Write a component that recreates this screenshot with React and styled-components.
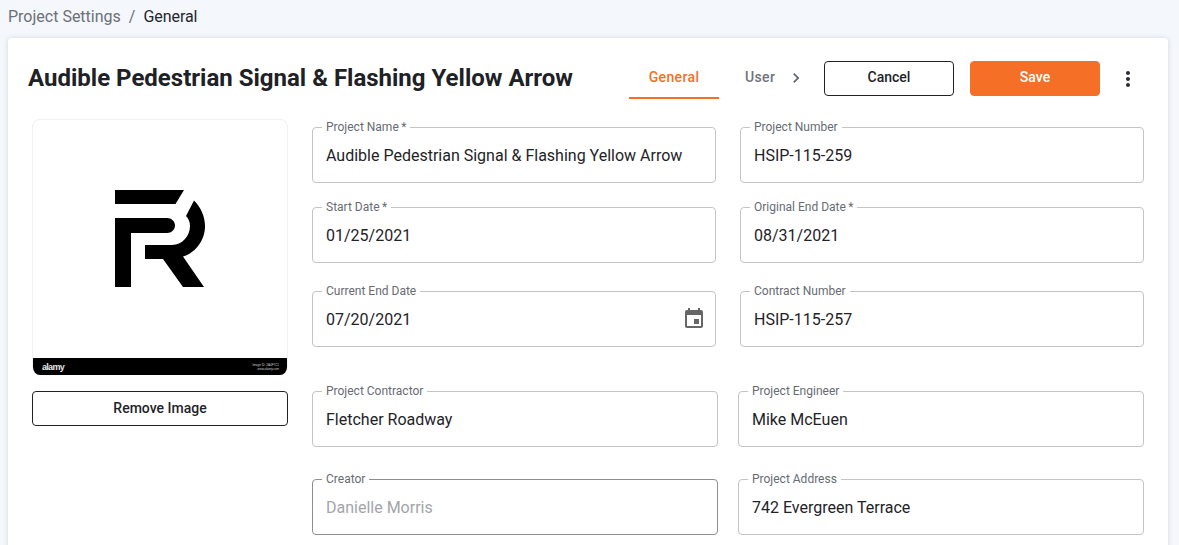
import React from "react";
import styled, { createGlobalStyle } from "styled-components";

const Global = createGlobalStyle`
  html, body { margin: 0; padding: 0; background: #f4f7fb; height: 100%; overflow: hidden; }
  body { font-family: Roboto, "Liberation Sans", sans-serif; color: #1f2328; }
  * { box-sizing: border-box; }
`;

const Page = styled.div`
  width: 1179px;
  height: 545px;
  overflow: hidden;
  padding: 0 11px 0 8px;
`;
const Crumbs = styled.nav`
  display: flex;
  align-items: center;
  height: 38px;
  padding-bottom: 5px;
  font-size: 16px;
  line-height: 24px;
`;
const CrumbLink = styled.span`color: #6c7078;`;
const CrumbSep = styled.span`color: #6c7078; margin: 0 8px;`;
const CrumbNow = styled.span`color: #23272d; letter-spacing: -0.05px;`;
const Card = styled.main`
  background: #fff;
  border-radius: 4px 4px 0 0;
  box-shadow: 0 0 5px rgba(60, 70, 90, 0.18);
  height: 520px;
  padding: 0 24px;
`;
const Header = styled.header`
  display: flex;
  align-items: flex-start;
  height: 81px;
  padding-top: 23px;
`;
const Title = styled.h1`
  margin: 0 0 0 -4px;
  flex: 1;
  font-size: 24px;
  line-height: 34px;
  font-weight: 700;
  color: #1e2125;
  white-space: nowrap;
`;
const Tabs = styled.div`
  display: flex;
  align-items: flex-start;
  height: 38px;
`;
const Tab = styled.div`
  width: ${(p) => p.$w}px;
  height: 38px;
  padding-top: 8px;
  padding-left: ${(p) => p.$pl || 0}px;
  font-size: 14px;
  line-height: 16px;
  letter-spacing: 0.35px;
  font-weight: 500;
  text-align: ${(p) => (p.$pl ? "left" : "center")};
  color: ${(p) => (p.$active ? "#f56f26" : "#6f747b")};
  border-bottom: 2px solid ${(p) => (p.$active ? "#f56f26" : "transparent")};
`;
const Chevron = styled.div`
  width: 32px;
  height: 32px;
  display: flex;
  align-items: center;
  justify-content: center;
  color: #5f6368;
  margin: 1px 12px 0 5px;
`;
const Button = styled.button`
  width: ${(p) => p.$w || 130}px;
  height: 35px;
  margin-left: ${(p) => p.$ml || 0}px;
  padding: 0 0 4px;
  border-radius: 4px;
  border: 1px solid ${(p) => (p.$primary ? "#f56f26" : "#1f2328")};
  background: ${(p) => (p.$primary ? "#f56f26" : "#fff")};
  color: ${(p) => (p.$primary ? "#fff" : "#1f2328")};
  font: 500 14px/16px Roboto, "Liberation Sans", sans-serif;
`;
const Dots = styled.div`
  width: 24px;
  height: 35px;
  margin: 0 4px 0 16px;
  display: flex;
  align-items: center;
  justify-content: center;
  color: #2a2d31;
`;
const Content = styled.div`
  display: grid;
  grid-template-columns: 256px 832px;
  column-gap: 24px;
`;
const Aside = styled.aside`
  display: flex;
  flex-direction: column;
`;
const Picture = styled.div`
  width: 256px;
  height: 256px;
  border-radius: 8px;
  border: 1px solid #f1f1f1;
  border-bottom: none;
  overflow: hidden;
  display: flex;
  flex-direction: column;
`;
const PictureMain = styled.div`
  flex: 1;
  display: flex;
  align-items: center;
  justify-content: center;
`;
const LogoSvg = styled.svg`
  display: block;
  margin: 0;
`;
const Stock = styled.div`
  height: 17px;
  margin: 0 -1px;
  background: #000;
  color: #fff;
  display: flex;
  align-items: center;
  justify-content: space-between;
  padding: 0 9px 0 10px;
`;
const StockBrand = styled.span`
  font: 700 9px/10px "Liberation Sans", sans-serif;
  letter-spacing: -0.7px;
  color: #e6e6e6;
`;
const StockMeta = styled.span`
  font: 3px/4px "Liberation Sans", sans-serif;
  text-align: right;
  color: #cfcfcf;
`;
const RemoveButton = styled(Button)`
  width: 256px;
  height: 35px;
  margin-top: 16px;
  padding-bottom: 2px;
`;
const Fields = styled.div`
  display: flex;
  flex-direction: column;
  padding-top: 8px;
`;
const Row = styled.div`
  display: grid;
  grid-template-columns: ${(p) => (p.$wide ? "406px 406px" : "404px 404px")};
  column-gap: ${(p) => (p.$wide ? 20 : 24)}px;
  margin-top: ${(p) => p.$top || 0}px;
`;
const Field = styled.div`
  position: relative;
  height: 56px;
  border: 1px solid ${(p) => (p.$dim ? "#8f8f8f" : "#c4c4c4")};
  border-radius: 4px;
  padding: 2px 13px 0;
  display: flex;
  align-items: center;
  justify-content: space-between;
`;
const Label = styled.label`
  position: absolute;
  top: -8px;
  left: 9px;
  padding: 0 4px;
  background: #fff;
  color: #686c72;
  font-size: 12px;
  line-height: 14px;
  white-space: nowrap;
`;
const Value = styled.span`
  font-size: 16px;
  line-height: 24px;
  color: ${(p) => (p.$dim ? "#a3a5a9" : "#1f2328")};
  white-space: nowrap;
`;
const CalendarSvg = styled.svg`
  display: block;
  margin: -2px -4px 0 0;
  color: #666;
`;

const Logo = () => (
  <LogoSvg width="90" height="98" viewBox="115 190 90 98" aria-hidden="true">
    <path d="M115 190H184L175.5 204H115Z" fill="#000" />
    <path d="M115 218H167C171.5 218 175 221.3 175 225.5C175 229.7 171.5 233 167 233H131V287H115Z" fill="#000" />
    <path d="M145 245H172C182 245 190 236 190 226C190 222 188.5 218.5 186 216L194 200.5C200.5 207 205 216 205 226C205 241 195 253 183 256.5L204 287H183L163 259H145Z" fill="#000" />
  </LogoSvg>
);

const Calendar = () => (
  <CalendarSvg width="24" height="24" viewBox="0 0 24 24" fill="currentColor" aria-hidden="true">
    <path d="M17 12h-5v5h5v-5zM16 1v2H8V1H6v2H5c-1.11 0-1.99.9-1.99 2L3 19c0 1.1.89 2 2 2h14c1.1 0 2-.9 2-2V5c0-1.1-.9-2-2-2h-1V1h-2zm3 18H5V8h14v11z" />
  </CalendarSvg>
);

const TextField = ({ label, value, dim, icon }) => (
  <Field $dim={dim}>
    <Label>{label}</Label>
    <Value $dim={dim}>{value}</Value>
    {icon}
  </Field>
);

export default function App() {
  return (
    <Page>
      <Global />
      <Crumbs>
        <CrumbLink>Project Settings</CrumbLink>
        <CrumbSep>/</CrumbSep>
        <CrumbNow>General</CrumbNow>
      </Crumbs>
      <Card>
        <Header>
          <Title>Audible Pedestrian Signal &amp; Flashing Yellow Arrow</Title>
          <Tabs>
            <Tab $active $w={90}>General</Tab>
            <Tab $w={56} $pl={26}>User</Tab>
            <Chevron>
              <svg width="20" height="20" viewBox="0 0 24 24" fill="currentColor" aria-hidden="true">
                <path d="M10 6 8.59 7.41 13.17 12l-4.58 4.59L10 18l6-6z" />
              </svg>
            </Chevron>
          </Tabs>
          <Button>Cancel</Button>
          <Button $primary $w={130} $ml={16}>Save</Button>
          <Dots>
            <svg width="24" height="24" viewBox="0 0 24 24" fill="currentColor" aria-hidden="true">
              <path d="M12 8c1.1 0 2-.9 2-2s-.9-2-2-2-2 .9-2 2 .9 2 2 2zm0 2c-1.1 0-2 .9-2 2s.9 2 2 2 2-.9 2-2-.9-2-2-2zm0 6c-1.1 0-2 .9-2 2s.9 2 2 2 2-.9 2-2-.9-2-2-2z" />
            </svg>
          </Dots>
        </Header>
        <Content>
          <Aside>
            <Picture>
              <PictureMain><Logo /></PictureMain>
              <Stock>
                <StockBrand>alamy</StockBrand>
                <StockMeta>Image ID: 2A4F7C1<br />www.alamy.com</StockMeta>
              </Stock>
            </Picture>
            <RemoveButton>Remove Image</RemoveButton>
          </Aside>
          <Fields>
            <Row>
              <TextField label={"Project Name\u2009*"} value="Audible Pedestrian Signal & Flashing Yellow Arrow" />
              <TextField label="Project Number" value="HSIP-115-259" />
            </Row>
            <Row $top={24}>
              <TextField label={"Start Date\u2009*"} value="01/25/2021" />
              <TextField label={"Original End Date\u2009*"} value="08/31/2021" />
            </Row>
            <Row $top={28}>
              <TextField label="Current End Date" value="07/20/2021" icon={<Calendar />} />
              <TextField label="Contract Number" value="HSIP-115-257" />
            </Row>
            <Row $wide $top={44}>
              <TextField label="Project Contractor" value="Fletcher Roadway" />
              <TextField label="Project Engineer" value="Mike McEuen" />
            </Row>
            <Row $wide $top={32}>
              <TextField dim label="Creator" value="Danielle Morris" />
              <TextField label="Project Address" value="742 Evergreen Terrace" />
            </Row>
          </Fields>
        </Content>
      </Card>
    </Page>
  );
}
